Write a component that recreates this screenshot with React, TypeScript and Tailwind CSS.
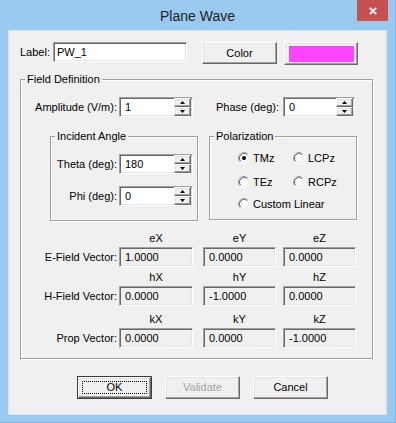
import type { ReactNode } from "react";

const sunken =
  "border border-t-[#a0a0a0] border-l-[#a0a0a0] border-b-white border-r-white shadow-[inset_1px_1px_0_#696969,inset_-1px_-1px_0_#e3e3e3]";
const raised =
  "border border-t-white border-l-white border-b-[#696969] border-r-[#696969] shadow-[inset_-1px_-1px_0_#a0a0a0,inset_1px_1px_0_#e3e3e3]";

const vectors = [
  { name: "E-Field Vector:", heads: ["eX", "eY", "eZ"], values: ["1.0000", "0.0000", "0.0000"], mt: "mt-[11px]" },
  { name: "H-Field Vector:", heads: ["hX", "hY", "hZ"], values: ["0.0000", "-1.0000", "0.0000"], mt: "mt-[4px]" },
  { name: "Prop Vector:", heads: ["kX", "kY", "kZ"], values: ["0.0000", "0.0000", "-1.0000"], mt: "mt-[7px]" },
];

const colWidths = ["w-[74px]", "w-[73px] ml-[10px]", "w-[73px] ml-[7px]"];

function Group({ title, className, children }: { title: string; className: string; children: ReactNode }) {
  return (
    <div className={`relative border border-[#a0a0a0] shadow-[inset_1px_1px_0_#fff,1px_1px_0_#fff] ${className}`}>
      <span className="absolute -top-[7px] left-[4px] bg-[#f0f0f0] px-[2px] leading-[13px]">{title}</span>
      {children}
    </div>
  );
}

function Arrow({ up }: { up?: boolean }) {
  return (
    <svg width="5" height="3" viewBox="0 0 5 3">
      <polygon points={up ? "0,3 2.5,0 5,3" : "0,0 5,0 2.5,3"} fill="#000" />
    </svg>
  );
}

function Spin({ value, w }: { value: string; w: string }) {
  return (
    <div className={`${sunken} ${w} h-[20px] bg-white flex`}>
      <div className="flex-1 pl-[5px] leading-[18px]">{value}</div>
      <div className="flex flex-col w-[17px] mr-[1px] my-[0px]">
        <div className={`${raised} h-[9px] bg-[#f0f0f0] flex items-center justify-center`}>
          <Arrow up />
        </div>
        <div className={`${raised} h-[9px] bg-[#f0f0f0] flex items-center justify-center`}>
          <Arrow />
        </div>
      </div>
    </div>
  );
}

function Radio({ label, checked, w }: { label: string; checked?: boolean; w?: string }) {
  return (
    <div className={`flex items-center gap-[3px] h-[12px] leading-[12px] ${w ?? ""}`}>
      <svg width="12" height="12" viewBox="0 0 12 12">
        <circle cx="6" cy="6" r="5" fill="#fff" />
        <path d="M2.11 9.89A5.5 5.5 0 0 1 9.89 2.11" stroke="#a0a0a0" fill="none" />
        <path d="M9.89 2.11A5.5 5.5 0 0 1 2.11 9.89" stroke="#fff" fill="none" />
        <path d="M2.82 9.18A4.5 4.5 0 0 1 9.18 2.82" stroke="#696969" fill="none" />
        <path d="M9.18 2.82A4.5 4.5 0 0 1 2.82 9.18" stroke="#e3e3e3" fill="none" />
        {checked && <circle cx="6" cy="6" r="2" fill="#000" />}
      </svg>
      <span>{label}</span>
    </div>
  );
}

function Button({ label, isDefault, disabled }: { label: string; isDefault?: boolean; disabled?: boolean }) {
  if (isDefault) {
    return (
      <div className="w-[75px] h-[23px] border border-[#3c3c3c]">
        <div className={`${raised} h-full bg-[#f0f0f0] p-[3px]`}>
          <div className="h-full border border-dotted border-black flex items-center justify-center">{label}</div>
        </div>
      </div>
    );
  }
  return (
    <div
      className={`${raised} w-[75px] h-[23px] bg-[#f0f0f0] flex items-center justify-center ${
        disabled ? "text-[#a2a2a2]" : ""
      }`}
    >
      {label}
    </div>
  );
}

export default function App() {
  return (
    <div className="w-[396px] h-[423px] bg-[#99c9ef] flex flex-col font-['Liberation_Sans',Arial,sans-serif] text-[11px] text-black border-r border-b border-[#86b7e4]">
      {/* title bar */}
      <div className="relative h-[30px] flex items-center justify-center">
        <span className="text-[14px] text-[#222] pt-[2px]">Plane Wave</span>
        <div className="absolute top-0 right-[7px] w-[31px] h-[21px] bg-[#c75050] flex items-center justify-center">
          <svg width="8" height="8" viewBox="0 0 8 8">
            <path d="M0.8 0.8L7.2 7.2M7.2 0.8L0.8 7.2" stroke="#fff" strokeWidth="1.9" />
          </svg>
        </div>
      </div>

      {/* client area */}
      <div className="mx-[8px] h-[385px] bg-[#f0f0f0] border border-[#d9e3ec] pl-[11px] pt-[11px] flex flex-col">
        <div className="flex items-start">
          <span className="w-[33px] h-[20px] leading-[20px]">Label:</span>
          <div className={`${sunken} w-[134px] h-[20px] bg-white pl-[3px] leading-[18px]`}>PW_1</div>
          <div className={`${raised} ml-[15px] w-[75px] h-[22px] bg-[#f0f0f0] flex items-center justify-center`}>
            Color
          </div>
          <div className={`${raised} ml-[7px] w-[74px] h-[23px] bg-[#f0f0f0] pl-[4px] pr-[3px] pt-[3px] pb-[2px]`}>
            <div className="h-full bg-[#ff44ff]" />
          </div>
        </div>

        <Group title="Field Definition" className="mt-[14px] w-[353px] h-[280px] flex flex-col">
          <div className="flex items-center mt-[17px]">
            <span className="w-[98px] text-right pr-[2px]">Amplitude (V/m):</span>
            <Spin value="1" w="w-[74px]" />
            <span className="w-[90px] text-right pr-[4px]">Phase (deg):</span>
            <Spin value="0" w="w-[72px]" />
          </div>

          <div className="flex mt-[19px]">
            <Group title="Incident Angle" className="ml-[29px] w-[148px] h-[85px] flex flex-col">
              <div className="flex items-center mt-[17px]">
                <span className="w-[68px] text-right pr-[2px]">Theta (deg):</span>
                <Spin value="180" w="w-[74px]" />
              </div>
              <div className="flex items-center mt-[12px]">
                <span className="w-[68px] text-right pr-[2px]">Phi (deg):</span>
                <Spin value="0" w="w-[74px]" />
              </div>
            </Group>
            <Group title="Polarization" className="ml-[11px] w-[148px] h-[84px] flex flex-col pl-[28px] pt-[15px]">
              <div className="flex">
                <Radio label="TMz" checked w="w-[55px]" />
                <Radio label="LCPz" />
              </div>
              <div className="flex mt-[12px]">
                <Radio label="TEz" w="w-[55px]" />
                <Radio label="RCPz" />
              </div>
              <div className="flex mt-[10px]">
                <Radio label="Custom Linear" />
              </div>
            </Group>
          </div>

          {vectors.map((v) => (
            <div key={v.name} className={`flex flex-col ${v.mt}`}>
              <div className="flex h-[12px] leading-[12px] pl-[98px]">
                {v.heads.map((h, i) => (
                  <span key={h} className={`${colWidths[i]} text-center`}>
                    {h}
                  </span>
                ))}
              </div>
              <div className="flex items-center mt-[3px]">
                <span className="w-[98px] text-right pr-[2px]">{v.name}</span>
                {v.values.map((val, i) => (
                  <div key={i} className={`${sunken} ${colWidths[i]} h-[20px] pl-[5px] leading-[18px]`}>
                    {val}
                  </div>
                ))}
              </div>
            </div>
          ))}
        </Group>

        <div className="flex mt-[17px] ml-[57px] gap-[13px]">
          <Button label="OK" isDefault />
          <Button label="Validate" disabled />
          <Button label="Cancel" />
        </div>
      </div>
    </div>
  );
}
